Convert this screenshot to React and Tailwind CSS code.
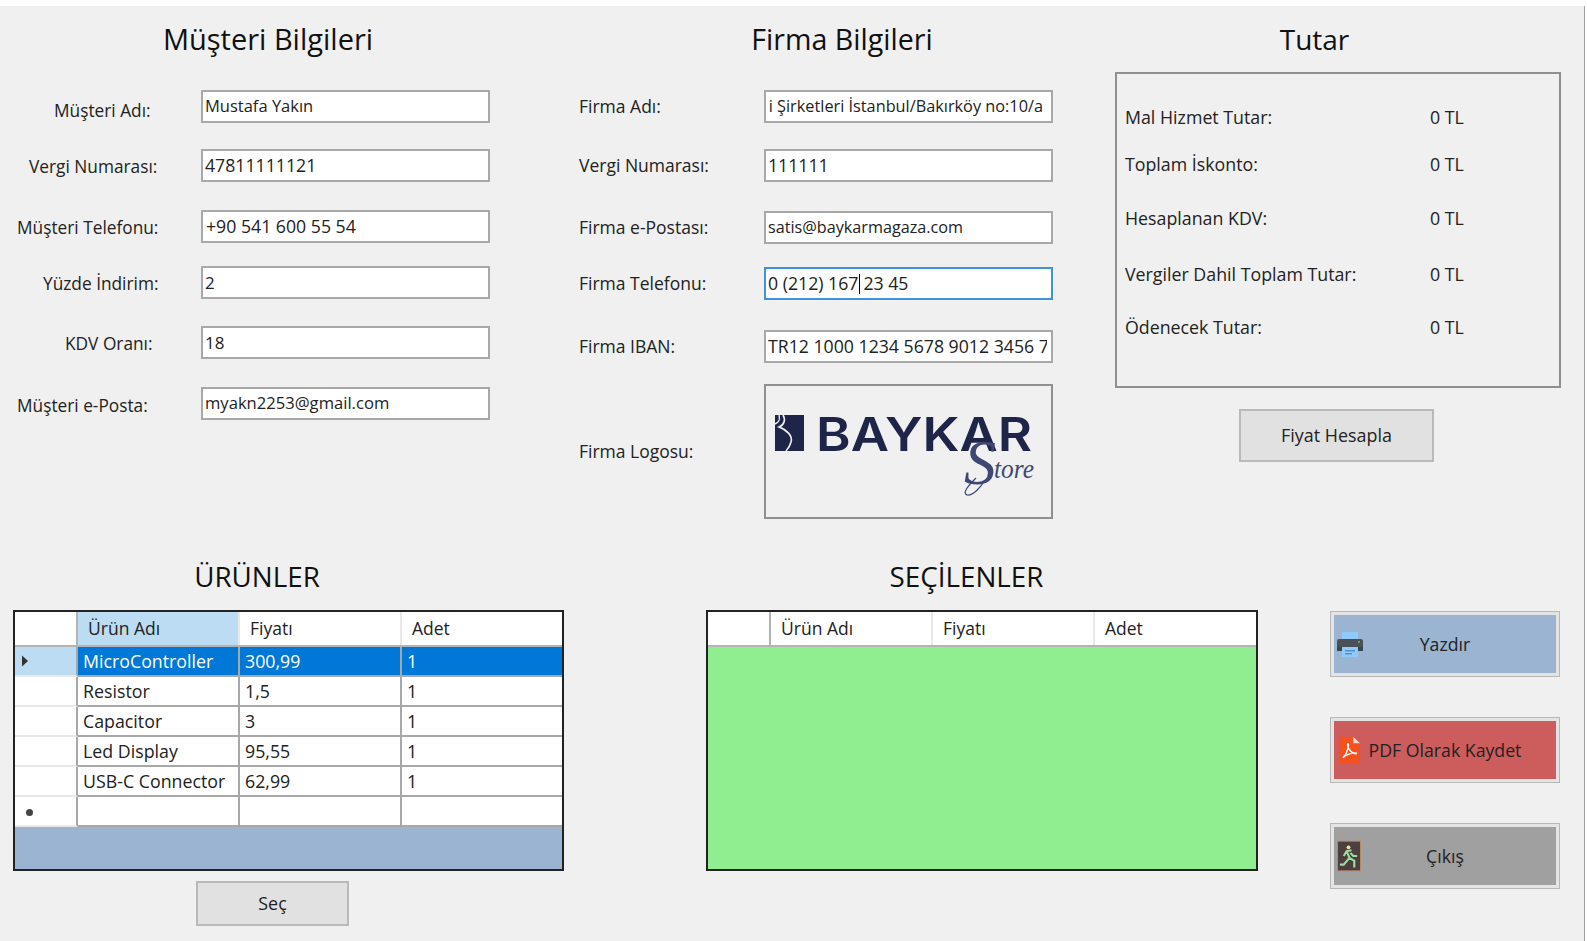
import React from 'react';

const customerFields = [
  { label: 'Müşteri Adı:', value: 'Mustafa Yakın', rowClass: 'mt-[28px]', labelClass: 'pl-[54px] pt-[8px]', valueClass: 'text-[16.5px]' },
  { label: 'Vergi Numarası:', value: '47811111121', rowClass: 'mt-[25px]', labelClass: 'pl-[29px] pt-[5px]', valueClass: 'text-[17.7px]' },
  { label: 'Müşteri Telefonu:', value: '+90 541 600 55 54', rowClass: 'mt-[28px]', labelClass: 'pl-[17px] pt-[5px]', valueClass: 'text-[17.7px] pl-[3px]' },
  { label: 'Yüzde İndirim:', value: '2', rowClass: 'mt-[23px]', labelClass: 'pl-[43px] pt-[5px]', valueClass: 'text-[17px]' },
  { label: 'KDV Oranı:', value: '18', rowClass: 'mt-[27px]', labelClass: 'pl-[65px] pt-[5px]', valueClass: 'text-[17px]' },
  { label: 'Müşteri e-Posta:', value: 'myakn2253@gmail.com', rowClass: 'mt-[28px]', labelClass: 'pl-[17px] pt-[6px]', valueClass: 'text-[16.6px]' },
];

const totals = [
  { label: 'Mal Hizmet Tutar:', rowClass: 'mt-[32px]' },
  { label: 'Toplam İskonto:', rowClass: 'mt-[25px]' },
  { label: 'Hesaplanan KDV:', rowClass: 'mt-[32px]' },
  { label: 'Vergiler Dahil Toplam Tutar:', rowClass: 'mt-[34px]' },
  { label: 'Ödenecek Tutar:', rowClass: 'mt-[31px]' },
];

const products = [
  { name: 'MicroController', price: '300,99', qty: '1' },
  { name: 'Resistor', price: '1,5', qty: '1' },
  { name: 'Capacitor', price: '3', qty: '1' },
  { name: 'Led Display', price: '95,55', qty: '1' },
  { name: 'USB-C Connector', price: '62,99', qty: '1' },
  { name: '', price: '', qty: '' },
];

const TextBox = ({ children, className = '' }) => (
  <div className={`w-[289px] h-[33px] flex items-center overflow-hidden whitespace-nowrap bg-white border-2 px-[2px] ${className}`}>
    {children}
  </div>
);

const Title = ({ className, children }) => (
  <h2 className={`h-[40px] text-center leading-[40px] font-normal text-[#111] ${className}`}>{children}</h2>
);

const FormButton = ({ className, children }) => (
  <button className={`flex items-center justify-center bg-[#e1e1e1] border-2 border-[#b9b9b9] text-[#222] text-[17.9px] ${className}`}>
    {children}
  </button>
);

const HeaderCell = ({ active, children }) => (
  <div className={`flex items-center pl-[10px] border-r-2 border-[#e8e8e8] last:border-r-0 ${active ? 'bg-[#bbdcf3]' : 'bg-white'}`}>
    {children}
  </div>
);

const GridHeader = ({ active }) => (
  <div className="grid grid-cols-[63px_162px_162px_160px] h-[35px] bg-white border-b-2 border-[#b4b4b4] shrink-0 text-[17.5px]">
    <div className="border-r-2 border-[#b4b4b4]" />
    <HeaderCell active={active}>Ürün Adı</HeaderCell>
    <HeaderCell>Fiyatı</HeaderCell>
    <HeaderCell>Adet</HeaderCell>
  </div>
);

const ProductRow = ({ row, index }) => {
  const selected = index === 0;
  const last = index === products.length - 1;
  const cell = `flex items-center pl-[5px] border-r-2 border-b-2 border-[#a8a8a8] last:border-r-0 ${selected ? 'bg-[#0078d7] text-white' : 'bg-white'}`;
  return (
    <div className="grid grid-cols-[63px_162px_162px_160px] h-[30px] text-[17.8px]">
      <div className={`flex items-center pl-[6px] border-r-2 border-b-2 border-r-[#a8a8a8] border-b-[#e8e8e8] ${selected ? 'bg-[#bbdcf3]' : 'bg-white'}`}>
        {selected && (
          <svg width="8" height="12" viewBox="0 0 8 12"><path d="M1 0.5 L7 6 L1 11.5 Z" fill="#333" /></svg>
        )}
        {last && <span className="ml-[5px] mt-[2px] w-[7px] h-[7px] rounded-full bg-[#444]" />}
      </div>
      <div className={cell}>{row.name}</div>
      <div className={cell}>{row.price}</div>
      <div className={cell}>{row.qty}</div>
    </div>
  );
};

const PrinterIcon = () => (
  <svg className="absolute left-[2px] top-[17px]" width="28" height="26" viewBox="0 0 28 26">
    <rect x="6" y="0" width="16" height="8" fill="#90caf9" />
    <path d="M3 7h22a2 2 0 0 1 2 2v10h-26v-10a2 2 0 0 1 2-2z" fill="#4a5156" />
    <rect x="1" y="15" width="26" height="4" fill="#37474f" />
    <rect x="6" y="15" width="16" height="10" fill="#90caf9" />
    <rect x="9" y="18" width="10" height="1.5" fill="#4f93d0" />
    <rect x="9" y="21" width="7" height="1.5" fill="#4f93d0" />
    <circle cx="23" cy="10" r="1" fill="#66bb6a" />
  </svg>
);

const PdfIcon = () => (
  <svg className="absolute left-[5px] top-[15px]" width="21" height="28" viewBox="0 0 22 28">
    <path d="M0 0h15l7 7v21h-22z" fill="#f4511e" />
    <path d="M15 0l7 7h-7z" fill="#fbd5c8" />
    <path d="M4 22c3-2 5-7 6-13 0-2-1-2-1 0 1 5 4 8 8 9 2 0 2-1 0-1-4 0-8 1-13 5z" fill="none" stroke="#fff" strokeWidth="1.5" />
  </svg>
);

const ExitIcon = () => (
  <svg className="absolute left-[3px] top-[13px]" width="24" height="32" viewBox="0 0 25 32">
    <rect x="0.5" y="0.5" width="24" height="31" fill="#4b3f42" stroke="#b98a66" />
    <circle cx="12" cy="7" r="2" fill="#f5e28a" />
    <path d="M15 10l-5 1-3 5M10 11l3 7-6 7H3M13 18l5 3v7M14 13l3 3h4" fill="none" stroke="#9fdc9f" strokeWidth="2.2" />
  </svg>
);

const BaykarLogo = () => (
  <svg width="285" height="131" viewBox="0 0 285 131" className="block">
    <path d="M9 29h29v36H9z" fill="#1f2549" />
    <path d="M17 29C20 34 18 39 13 41C21 44 27 50 25 56C24 60 22 63 20 65" fill="none" stroke="#f0f0f0" strokeWidth="1.6" />
    <path d="M13 29C14 33 14 36 9 38" fill="none" stroke="#f0f0f0" strokeWidth="1.4" />
    <text x="50" y="65" textLength="216" lengthAdjust="spacingAndGlyphs" fontFamily="Inter, sans-serif" fontWeight="600" fontSize="46" fill="#1f2549">BAYKAR</text>
    <text x="198" y="98" fontFamily="'Liberation Serif', serif" fontStyle="italic" fontSize="64" fill="#3f4874">S</text>
    <text x="228" y="92" textLength="40" lengthAdjust="spacingAndGlyphs" fontFamily="'Liberation Serif', serif" fontStyle="italic" fontSize="28" fill="#3f4874">tore</text>
    <path d="M210 92C202 100 196 107 201 109C207 110 215 101 219 94" fill="none" stroke="#3f4874" strokeWidth="1.2" />
  </svg>
);

export default function App() {
  return (
    <div className="w-[1587px] h-[941px] overflow-hidden bg-white font-['Open_Sans',sans-serif] text-[17.3px] text-[#222]">
      <div className="h-[6px] bg-white" />
      <div className="w-[1585px] h-[935px] bg-[#f0f0f0] border-r border-[#a0a0a0]">
        {/* Top: customer, company and totals */}
        <div className="flex h-[535px]">
          <section className="w-[579px] pt-[13px]">
            <Title className="ml-[68px] w-[400px] text-[29px]">Müşteri Bilgileri</Title>
            <div className="pt-[3px]">
              {customerFields.map((f) => (
                <div key={f.label} className={`flex ${f.rowClass}`}>
                  <div className={`w-[201px] ${f.labelClass}`}>{f.label}</div>
                  <TextBox className={`border-[#a8a8a8] ${f.valueClass}`}>{f.value}</TextBox>
                </div>
              ))}
            </div>
          </section>

          <section className="w-[536px] pt-[13px]">
            <Title className="ml-[63px] w-[400px] text-[28.6px]">Firma Bilgileri</Title>
            <div className="pt-[31px] w-[474px] text-[17.5px]">
              <div className="flex items-center">
                <div className="w-[185px]">Firma Adı:</div>
                <TextBox className="justify-end border-[#a8a8a8] text-[16.3px]">
                  <span className="pr-[6px]">i Şirketleri İstanbul/Bakırköy no:10/a</span>
                </TextBox>
              </div>
              <div className="flex items-center mt-[26px]">
                <div className="w-[185px]">Vergi Numarası:</div>
                <TextBox className="border-[#a8a8a8] text-[17.7px]">111111</TextBox>
              </div>
              <div className="flex items-center mt-[29px]">
                <div className="w-[185px]">Firma e-Postası:</div>
                <TextBox className="border-[#a8a8a8] text-[16.2px]">satis@baykarmagaza.com</TextBox>
              </div>
              <div className="flex items-center mt-[23px]">
                <div className="w-[185px]">Firma Telefonu:</div>
                <TextBox className="border-[#3d93e0] text-[17.7px]">
                  0 (212) 167<span className="inline-block w-px h-[20px] bg-black ml-[1px] mr-[3px]" />23 45
                </TextBox>
              </div>
              <div className="flex items-center mt-[30px]">
                <div className="w-[185px]">Firma IBAN:</div>
                <TextBox className="border-[#a8a8a8] text-[17.7px]">
                  <div className="w-[279px] overflow-hidden">TR12 1000 1234 5678 9012 3456 78</div>
                </TextBox>
              </div>
              <div className="flex items-center mt-[21px]">
                <div className="w-[185px]">Firma Logosu:</div>
                <div className="w-[289px] h-[135px] border-2 border-[#8f8f8f]">
                  <BaykarLogo />
                </div>
              </div>
            </div>
          </section>

          <section className="w-[446px] pt-[13px] text-[17.8px]">
            <Title className="w-[399px] text-[28px]">Tutar</Title>
            <div className="mt-[13px] h-[316px] border-2 border-[#8f8f8f] pl-[8px]">
              {totals.map((t) => (
                <div key={t.label} className={`flex h-[22px] items-center ${t.rowClass}`}>
                  <div className="w-[305px]">{t.label}</div>
                  <div>0 TL</div>
                </div>
              ))}
            </div>
            <FormButton className="ml-[124px] mt-[21px] w-[195px] h-[53px]">Fiyat Hesapla</FormButton>
          </section>
        </div>

        {/* Bottom: product grids and actions */}
        <div className="flex pl-[13px]">
          <section className="w-[551px] pt-[15px]">
            <Title className="w-[488px] text-[27.8px]">ÜRÜNLER</Title>
            <div className="mt-[14px] h-[261px] border-2 border-[#222] bg-[#9ab4d2] flex flex-col">
              <GridHeader active />
              {products.map((row, i) => (
                <ProductRow key={i} row={row} index={i} />
              ))}
            </div>
            <FormButton className="ml-[183px] mt-[10px] w-[153px] h-[45px]">Seç</FormButton>
          </section>

          <section className="ml-[142px] w-[552px] pt-[15px]">
            <Title className="w-[521px] text-[27.8px]">SEÇİLENLER</Title>
            <div className="mt-[14px] h-[261px] border-2 border-[#222] bg-[#90ee90] flex flex-col">
              <GridHeader />
            </div>
          </section>

          <section className="ml-[72px] w-[230px] pt-[70px] flex flex-col gap-[40px] text-[17.7px]">
            <button className="relative h-[66px] flex items-center justify-center bg-[#9ab4d2] border-4 border-[#e4e4e4] outline outline-1 -outline-offset-1 outline-[#b8b8b8]">
              <PrinterIcon />
              Yazdır
            </button>
            <button className="relative h-[66px] flex items-center justify-center bg-[#cd5c5c] border-4 border-[#e4e4e4] outline outline-1 -outline-offset-1 outline-[#b8b8b8]">
              <PdfIcon />
              PDF Olarak Kaydet
            </button>
            <button className="relative h-[66px] flex items-center justify-center bg-[#a0a0a0] border-4 border-[#e4e4e4] outline outline-1 -outline-offset-1 outline-[#b8b8b8]">
              <ExitIcon />
              Çıkış
            </button>
          </section>
        </div>
      </div>
    </div>
  );
}
